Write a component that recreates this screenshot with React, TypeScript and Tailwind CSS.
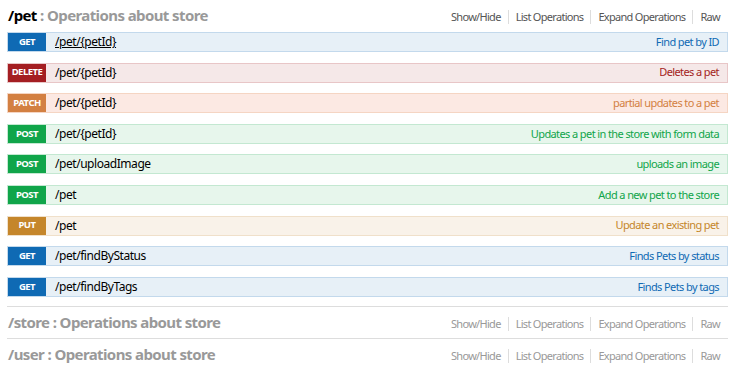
import React from "react";

type Op = { m: string; path: string; desc: string; underline?: boolean };

const styles: Record<string, { badge: string; row: string; desc: string }> = {
  GET: { badge: "bg-[#0f6ab4]", row: "bg-[#e7f0f7] border-[#c3d9ec]", desc: "text-[#0f6ab4]" },
  DELETE: { badge: "bg-[#a41e22]", row: "bg-[#f5e8e8] border-[#e8c6c7]", desc: "text-[#a41e22]" },
  PATCH: { badge: "bg-[#d38042]", row: "bg-[#fce9e3] border-[#f5d5c3]", desc: "text-[#d38042]" },
  POST: { badge: "bg-[#10a54a]", row: "bg-[#e7f6ec] border-[#c3e8d1]", desc: "text-[#10a54a]" },
  PUT: { badge: "bg-[#c5862b]", row: "bg-[#f9f2e9] border-[#f0e0ca]", desc: "text-[#c5862b]" },
};

const ops: Op[] = [
  { m: "GET", path: "/pet/{petId}", desc: "Find pet by ID", underline: true },
  { m: "DELETE", path: "/pet/{petId}", desc: "Deletes a pet" },
  { m: "PATCH", path: "/pet/{petId}", desc: "partial updates to a pet" },
  { m: "POST", path: "/pet/{petId}", desc: "Updates a pet in the store with form data" },
  { m: "POST", path: "/pet/uploadImage", desc: "uploads an image" },
  { m: "POST", path: "/pet", desc: "Add a new pet to the store" },
  { m: "PUT", path: "/pet", desc: "Update an existing pet" },
  { m: "GET", path: "/pet/findByStatus", desc: "Finds Pets by status" },
  { m: "GET", path: "/pet/findByTags", desc: "Finds Pets by tags" },
];

function Links({ active }: { active: boolean }) {
  const items = ["Show/Hide", "List Operations", "Expand Operations", "Raw"];
  return (
    <div className={`flex items-center text-[11px] tracking-[-0.7px] pt-[3px] ${active ? "text-[#555]" : "text-[#999]"}`}>
      {items.map((t, i) => (
        <React.Fragment key={t}>
          {i > 0 && <span className="mx-[7px] w-px h-[14px] bg-[#ddd]" />}
          <span>{t}</span>
        </React.Fragment>
      ))}
    </div>
  );
}

function Header({ name, active }: { name: string; active: boolean }) {
  return (
    <div className="h-[31px] flex items-center justify-between pl-[1px] pr-[8px]">
      <div className="text-[15px] font-bold text-[#999] tracking-[-0.6px]">
        <span className={active ? "text-black" : "text-[#999]"}>{name}</span>
        <span> : Operations about store</span>
      </div>
      <Links active={active} />
    </div>
  );
}

export default function App() {
  return (
    <div
      className="w-[736px] h-[372px] bg-white pl-[7px] pr-[8px]"
      style={{ fontFamily: '"Noto Sans", "Open Sans", "DejaVu Sans", sans-serif' }}
    >
      <div className="border-b border-[#ddd]">
        <Header name="/pet" active />
        <div className="flex flex-col gap-[10.6px] pt-[1px] pb-[9px]">
          {ops.map((o, i) => {
            const s = styles[o.m];
            return (
              <div key={i} className={`h-[20px] border flex items-stretch ${s.row}`}>
                <div
                  className={`w-[38px] flex items-center justify-center text-white text-[9.5px] font-bold tracking-[-0.5px] ${s.badge}`}
                >
                  {o.m}
                </div>
                <div className={`pl-[9px] flex items-center text-[12px] tracking-[-0.45px] text-black ${o.underline ? "underline" : ""}`}>
                  {o.path}
                </div>
                <div className={`ml-auto pr-[8px] flex items-center text-[11px] tracking-[-0.6px] ${s.desc}`}>{o.desc}</div>
              </div>
            );
          })}
        </div>
      </div>
      <div className="border-b border-[#ddd]">
        <Header name="/store" active={false} />
      </div>
      <div className="border-b border-transparent">
        <Header name="/user" active={false} />
      </div>
    </div>
  );
}
